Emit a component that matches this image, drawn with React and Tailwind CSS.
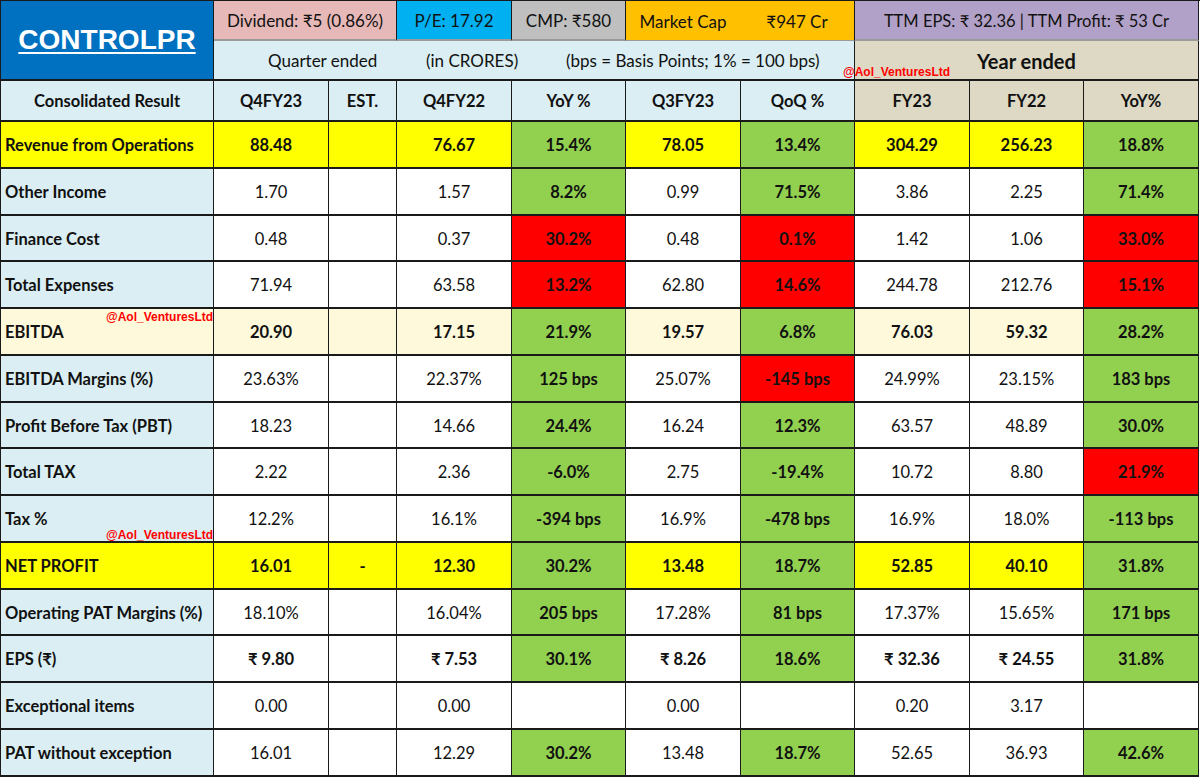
import React from 'react'

const cols = 'grid-cols-[213px_115px_68px_115px_114px_115px_114px_115px_114px_115px]'

const rows = [
  { label: 'Revenue from Operations', tone: 'yellow', bold: true, v: ['88.48', '', '76.67', ['15.4%', 'g'], '78.05', ['13.4%', 'g'], '304.29', '256.23', ['18.8%', 'g']] },
  { label: 'Other Income', v: ['1.70', '', '1.57', ['8.2%', 'g'], '0.99', ['71.5%', 'g'], '3.86', '2.25', ['71.4%', 'g']] },
  { label: 'Finance Cost', v: ['0.48', '', '0.37', ['30.2%', 'r'], '0.48', ['0.1%', 'r'], '1.42', '1.06', ['33.0%', 'r']] },
  { label: 'Total Expenses', v: ['71.94', '', '63.58', ['13.2%', 'r'], '62.80', ['14.6%', 'r'], '244.78', '212.76', ['15.1%', 'r']] },
  { label: 'EBITDA', tone: 'light', bold: true, v: ['20.90', '', '17.15', ['21.9%', 'g'], '19.57', ['6.8%', 'g'], '76.03', '59.32', ['28.2%', 'g']] },
  { label: 'EBITDA Margins (%)', v: ['23.63%', '', '22.37%', ['125 bps', 'g'], '25.07%', ['-145 bps', 'r'], '24.99%', '23.15%', ['183 bps', 'g']] },
  { label: 'Profit Before Tax (PBT)', v: ['18.23', '', '14.66', ['24.4%', 'g'], '16.24', ['12.3%', 'g'], '63.57', '48.89', ['30.0%', 'g']] },
  { label: 'Total TAX', v: ['2.22', '', '2.36', ['-6.0%', 'g'], '2.75', ['-19.4%', 'g'], '10.72', '8.80', ['21.9%', 'r']] },
  { label: 'Tax %', v: ['12.2%', '', '16.1%', ['-394 bps', 'g'], '16.9%', ['-478 bps', 'g'], '16.9%', '18.0%', ['-113 bps', 'g']] },
  { label: 'NET PROFIT', tone: 'yellow', bold: true, v: ['16.01', '-', '12.30', ['30.2%', 'g'], '13.48', ['18.7%', 'g'], '52.85', '40.10', ['31.8%', 'g']] },
  { label: 'Operating PAT Margins (%)', v: ['18.10%', '', '16.04%', ['205 bps', 'g'], '17.28%', ['81 bps', 'g'], '17.37%', '15.65%', ['171 bps', 'g']] },
  { label: 'EPS (₹)', bold: true, v: ['₹ 9.80', '', '₹ 7.53', ['30.1%', 'g'], '₹ 8.26', ['18.6%', 'g'], '₹ 32.36', '₹ 24.55', ['31.8%', 'g']] },
  { label: 'Exceptional items', v: ['0.00', '', '0.00', ['', 'w'], '0.00', ['', 'w'], '0.20', '3.17', ['', 'w']] },
  { label: 'PAT without exception', v: ['16.01', '', '12.29', ['30.2%', 'g'], '13.48', ['18.7%', 'g'], '52.65', '36.93', ['42.6%', 'g']] },
]

const toneBg = {
  yellow: 'bg-[#ffff00]',
  light: 'bg-[#fdf9da]',
}

const changeBg = { g: 'bg-[#92d050]', r: 'bg-[#ff0000]', w: 'bg-white' }

const cell = 'flex items-center justify-center pt-[2px] border-r border-b-2 border-[#1a1a1a] whitespace-nowrap'

const Watermark = ({ className }) => (
  <span className={`absolute font-['Liberation_Sans'] text-[12px] font-bold leading-none text-[#ff0000] ${className}`}>
    @Aol_VenturesLtd
  </span>
)

export default function App() {
  return (
    <div className="relative w-[1200px] h-[777px] bg-white font-['Lato','Noto_Sans',sans-serif] text-[16.5px] text-[#111]">
      <div className={`grid ${cols} grid-rows-[40px_40px_41px_repeat(14,46.75px)] border-l border-t border-[#1a1a1a]`}>
        {/* top header */}
        <div className="row-span-2 flex items-center justify-center border-r border-b-2 border-[#1a1a1a] bg-[#0070c0]">
          <span className="font-['Liberation_Sans',sans-serif] text-[28px] font-bold text-white underline underline-offset-[3px] decoration-2">
            CONTROLPR
          </span>
        </div>
        <div className={`col-span-2 ${cell} border-b border-b-[#9a9a9a] bg-[#e6b8b7] text-[17px]`}>Dividend: ₹5 (0.86%)</div>
        <div className={`${cell} border-b border-b-[#9a9a9a] bg-[#00b0f0] text-[17px]`}>P/E: 17.92</div>
        <div className={`${cell} border-b border-b-[#9a9a9a] bg-[#bfbfbf] text-[17px]`}>CMP: ₹580</div>
        <div className="col-span-2 flex pt-[2px] border-r border-b border-[#1a1a1a] border-b-[#9a9a9a] bg-[#ffc000] text-[17px]">
          <div className="flex-1 flex items-center justify-center">Market Cap</div>
          <div className="flex-1 flex items-center justify-center">₹947 Cr</div>
        </div>
        <div className={`col-span-3 ${cell} border-b border-b-[#9a9a9a] bg-[#b1a0c7] text-[16.5px]`}>TTM EPS: ₹ 32.36 | TTM Profit: ₹ 53 Cr</div>

        <div className="col-span-6 flex items-center pt-[2px] border-r border-b-2 border-[#1a1a1a] bg-[#daeef3] whitespace-nowrap text-[17px]">
          <div className="w-[212px] pl-[54px]">Quarter ended</div>
          <div className="w-[140px]">(in CRORES)</div>
          <div>(bps = Basis Points; 1% = 100 bps)</div>
        </div>
        <div className={`col-span-3 ${cell} bg-[#ddd9c4] text-[20px] font-bold`}>Year ended</div>

        {/* column headers */}
        {['Consolidated Result', 'Q4FY23', 'EST.', 'Q4FY22', 'YoY %', 'Q3FY23', 'QoQ %'].map((h) => (
          <div key={h} className={`${cell} bg-[#daeef3] font-bold`}>{h}</div>
        ))}
        {['FY23', 'FY22', 'YoY%'].map((h) => (
          <div key={h} className={`${cell} bg-[#ddd9c4] font-bold`}>{h}</div>
        ))}

        {/* data rows */}
        {rows.map((r) => (
          <React.Fragment key={r.label}>
            <div className={`flex items-center pl-1 pt-[2px] border-r border-b-2 border-[#1a1a1a] font-bold whitespace-nowrap ${r.tone ? toneBg[r.tone] : 'bg-[#daeef3]'}`}>
              {r.label}
            </div>
            {r.v.map((val, i) =>
              Array.isArray(val) ? (
                <div key={i} className={`${cell} font-bold ${changeBg[val[1]]}`}>{val[0]}</div>
              ) : (
                <div key={i} className={`${cell} ${r.bold ? 'font-bold' : ''} ${r.tone ? toneBg[r.tone] : 'bg-white'}`}>{val}</div>
              )
            )}
          </React.Fragment>
        ))}
      </div>

      <Watermark className="left-[843px] top-[66px]" />
      <Watermark className="left-[106px] top-[311px]" />
      <Watermark className="left-[106px] top-[529px]" />
    </div>
  )
}
